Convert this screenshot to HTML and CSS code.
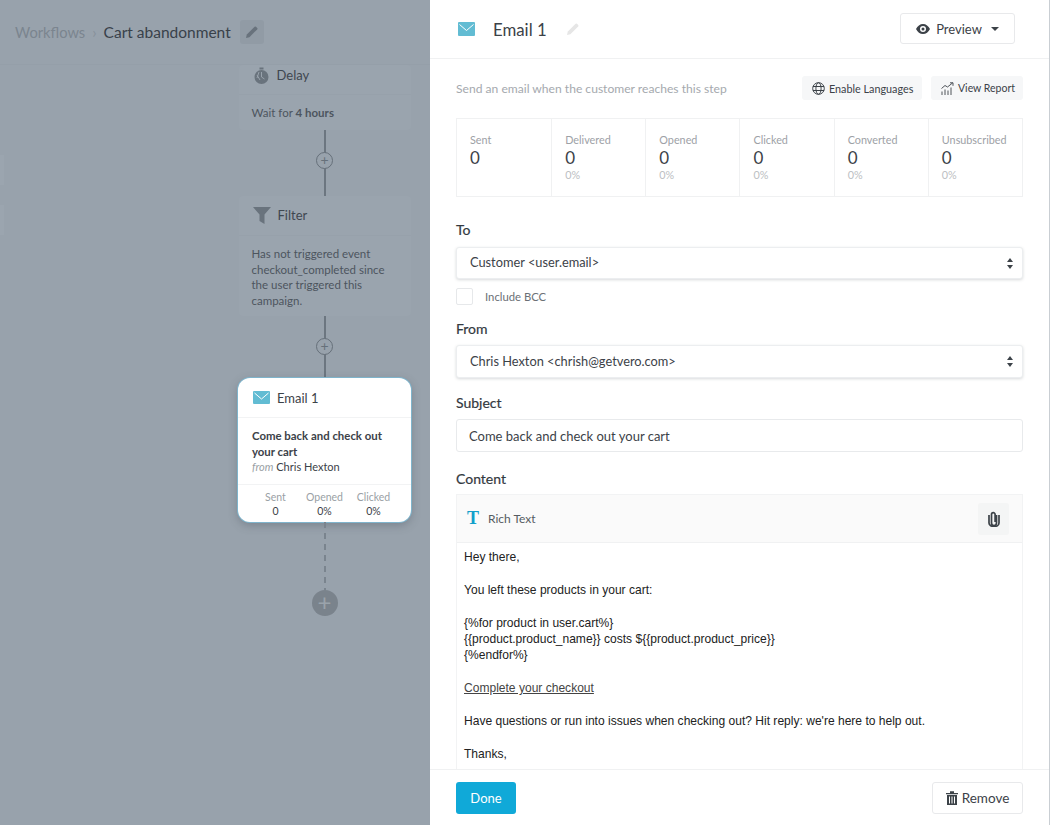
FILE: index.html
```html
<!DOCTYPE html>
<html lang="en">
<head>
    <meta charset="UTF-8">
    <title>Cart abandonment</title>
    <link rel="stylesheet" href="styles.css">
</head>
<body>
<!--workflow canvas-->
<section class="canvas">
    <header class="crumbs">
        <span class="crumb_root">Workflows</span>
        <span class="crumb_sep">&rsaquo;</span>
        <span class="crumb_name">Cart abandonment</span>
        <span class="crumb_edit">
            <svg width="14" height="14" viewBox="0 0 14 14"><path d="M1 13l.8-3.400L9.600 1.800a1 1 0 0 1 1.400 0l1.200 1.200a1 1 0 0 1 0 1.400L4.400 12.200z" fill="#68727c"/></svg>
        </span>
    </header>
    <div class="stub stub_a"></div>
    <div class="stub stub_b"></div>
    <div class="flow">
        <div class="node node_delay">
            <div class="node_head">
                <svg class="node_icon" width="17" height="18" viewBox="0 0 17 18"><circle cx="8.500" cy="10" r="7" fill="#69737d"/><rect x="6.500" y="0.500" width="4" height="2" fill="#69737d"/><path d="M8.500 5v5l3 2M4 8l3 5M6 5l-2 6" stroke="#98a2ac" fill="none"/></svg>
                <span>Delay</span>
            </div>
            <div class="node_body">Wait for <b>4 hours</b></div>
        </div>
        <div class="link link_a"><span class="plus">+</span></div>
        <div class="node node_filter">
            <div class="node_head">
                <svg class="node_icon" width="18" height="17" viewBox="0 0 18 17"><path d="M0 0h18l-6.500 7.500V17l-5-3V7.500z" fill="#69737d"/></svg>
                <span>Filter</span>
            </div>
            <div class="node_body">Has not triggered event checkout_completed since the user triggered this campaign.</div>
        </div>
        <div class="link link_b"><span class="plus">+</span></div>
        <div class="card">
            <div class="card_head">
                <svg width="17" height="13" viewBox="0 0 17 13"><rect width="17" height="13" rx="1" fill="#62bcd3"/><path d="M1.500 2l7 6 7-6" stroke="#fff" fill="none"/></svg>
                <span>Email 1</span>
            </div>
            <div class="card_body">
                <b>Come back and check out your cart</b>
                <div><i>from</i> Chris Hexton</div>
            </div>
            <div class="card_stats">
                <div><span>Sent</span>0</div>
                <div><span>Opened</span>0%</div>
                <div><span>Clicked</span>0%</div>
            </div>
        </div>
        <div class="link_dash"></div>
        <span class="plus_big">+</span>
    </div>
</section>

<!--email settings-->
<section class="panel">
    <header class="panel_head">
        <svg width="17" height="14" viewBox="0 0 17 14"><rect width="17" height="14" rx="1" fill="#62bcd3"/><path d="M1.500 2.500l7 6 7-6" stroke="#fff" fill="none"/></svg>
        <h1>Email 1</h1>
        <svg class="title_edit" width="14" height="14" viewBox="0 0 14 14"><path d="M1 13l.8-3.400L9.600 1.800a1 1 0 0 1 1.400 0l1.200 1.200a1 1 0 0 1 0 1.400L4.400 12.200z" fill="#e6e6e6"/></svg>
        <button class="btn_preview">
            <svg width="14" height="10" viewBox="0 0 14 10"><path d="M7 0C4 0 1.500 2 0 5c1.500 3 4 5 7 5s5.500-2 7-5c-1.500-3-4-5-7-5zm0 8a3 3 0 1 1 0-6 3 3 0 0 1 0 6z" fill="#3c4248"/><circle cx="7" cy="5" r="1.500" fill="#3c4248"/></svg>
            Preview
            <span class="caret"></span>
        </button>
    </header>

    <div class="panel_body">
        <div class="intro">
            <p>Send an email when the customer reaches this step</p>
            <button class="btn_soft btn_enable">
                <svg width="13" height="13" viewBox="0 0 13 13" fill="none" stroke="#3c4248"><circle cx="6.500" cy="6.500" r="5.800"/><ellipse cx="6.500" cy="6.500" rx="2.600" ry="5.800"/><path d="M1 4.500h11M1 8.500h11"/></svg>
                Enable Languages
            </button>
            <button class="btn_soft btn_report">
                <svg width="13" height="13" viewBox="0 0 13 13" fill="none" stroke="#3c4248" stroke-width="0.900"><path d="M1 13V9.500M4 13V7.500M7 13V8.500M10 13V5.500M.5 6.500L4 3.500l2.500 1.500L11.500 1M9 .8h3v3"/></svg>
                View Report
            </button>
        </div>

        <div class="stats">
            <div class="stat"><label>Sent</label><strong>0</strong></div>
            <div class="stat"><label>Delivered</label><strong>0</strong><small>0%</small></div>
            <div class="stat"><label>Opened</label><strong>0</strong><small>0%</small></div>
            <div class="stat"><label>Clicked</label><strong>0</strong><small>0%</small></div>
            <div class="stat"><label>Converted</label><strong>0</strong><small>0%</small></div>
            <div class="stat"><label>Unsubscribed</label><strong>0</strong><small>0%</small></div>
        </div>

        <h2 class="field_to">To</h2>
        <div class="select">Customer &lt;user.email&gt;<span class="updown"></span></div>
        <div class="bcc"><span class="check"></span>Include BCC</div>

        <h2 class="field_from">From</h2>
        <div class="select select_from">Chris Hexton &lt;chrish@getvero.com&gt;<span class="updown"></span></div>

        <h2 class="field_subject">Subject</h2>
        <div class="input">Come back and check out your cart</div>

        <h2 class="field_content">Content</h2>
        <div class="editor">
            <div class="editor_bar">
                <span class="editor_t">T</span>
                <span>Rich Text</span>
                <span class="clip">
                    <svg width="12" height="16" viewBox="0 0 12 16" fill="none" stroke="#3c4248" stroke-width="1.700"><path d="M8.500 4v8a2.500 2.500 0 0 1-5 0V3.500a1.800 1.800 0 0 1 3.600 0V11"/><path d="M11 4v8a5 3.500 0 0 1-10 0V4"/></svg>
                </span>
            </div>
            <div class="editor_text">
                Hey there,<br><br>
                You left these products in your cart:<br><br>
                {%for product in user.cart%}<br>
                {{product.product_name}} costs ${{product.product_price}}<br>
                {%endfor%}<br><br>
                <u>Complete your checkout</u><br><br>
                Have questions or run into issues when checking out? Hit reply: we're here to help out.<br><br>
                Thanks,
            </div>
        </div>
    </div>

    <footer class="panel_foot">
        <button class="btn_done">Done</button>
        <button class="btn_remove">
            <svg width="12" height="14" viewBox="0 0 12 14"><path d="M0 2h12v1.200H0zM4 .3h4V2H4zM1 4h10v10H1z" fill="#3c4248"/><path d="M3.500 5.500V12.500M6 5.500V12.500M8.500 5.500V12.500" stroke="#fff"/></svg>
            Remove
        </button>
    </footer>
</section>
</body>
</html>
```

FILE: styles.css
```css
*{
    margin: 0;
    padding: 0;
    box-sizing: border-box;
}
html,body{
    height: 100%;
}
body{
    display: flex;
    width: 1050px;
    height: 825px;
    overflow: hidden;
    font-family: "Lato", "Liberation Sans", sans-serif;
    color: #3c4248;
    background-color: #98a2ac;
}
button{
    font-family: inherit;
    cursor: pointer;
}

/* canvas */
.canvas{
    position: relative;
    flex: none;
    width: 430px;
    height: 825px;
    overflow: hidden;
    background-color: #98a2ac;
}
.crumbs{
    display: flex;
    align-items: center;
    height: 65px;
    padding-left: 15px;
    font-size: 15.500px;
    border-bottom: 1px solid #959fa9;
}
.crumb_root{
    font-size: 14.700px;
    color: #7b858f;
}
.crumb_sep{
    margin: 0 7px;
    color: #87919b;
}
.crumb_name{
    color: #39414a;
}
.crumb_edit{
    display: flex;
    align-items: center;
    justify-content: center;
    width: 24px;
    height: 24px;
    margin-left: 9px;
    border-radius: 3px;
    background-color: #919ba5;
}
.stub{
    position: absolute;
    left: 0;
    width: 4px;
    height: 30px;
    background-color: #9ba5af;
}
.stub_a{
    top: 155px;
}
.stub_b{
    top: 205px;
}
.flow{
    display: flex;
    flex-direction: column;
    align-items: center;
    width: 173px;
    margin-left: 238px;
}
.node{
    width: 172px;
    border-radius: 4px;
    background-color: #9aa4ae;
    color: #4d555e;
    font-size: 11.500px;
    line-height: 15.500px;
}
.node_head{
    display: flex;
    align-items: center;
    gap: 7px;
    padding-left: 14px;
    font-size: 13px;
    color: #3f4750;
    border-bottom: 1px solid #97a1ab;
}
.node_delay .node_head{
    height: 30px;
    padding-bottom: 8px;
}
.node_filter .node_head{
    height: 40px;
}
.node_body{
    padding: 10px 13px;
}
.node_delay .node_body{
    height: 35px;
}
.node_filter .node_body{
    height: 80px;
}
.link{
    display: flex;
    align-items: center;
    justify-content: center;
    width: 100%;
    background: linear-gradient(#6c7680,#6c7680) center / 2px 100% no-repeat;
}
.link_a{
    height: 66px;
}
.link_b{
    height: 62px;
}
.plus{
    display: block;
    width: 17px;
    height: 17px;
    border: 1px solid #66707a;
    border-radius: 50%;
    background-color: #98a2ac;
    color: #66707a;
    font-size: 14px;
    line-height: 14px;
    text-align: center;
}
.link_a .plus{
    margin-top: -6px;
}
.link_b .plus{
    margin-top: -2px;
}
.card{
    width: 173px;
    height: 144px;
    border-radius: 12px;
    background-color: #FFFFFF;
    box-shadow: 0 0 0 1px #7fb4cc, 0 3px 10px rgba(60,70,80,0.35);
    color: #3c4248;
}
.card_head{
    display: flex;
    align-items: center;
    gap: 7px;
    height: 40px;
    padding-left: 15px;
    font-size: 13px;
    border-bottom: 1px solid #f2f3f4;
}
.card_body{
    height: 67px;
    padding: 10px 14px 0;
    font-size: 11px;
    line-height: 15.700px;
    border-bottom: 1px solid #f2f3f4;
}
.card_body b{
    font-size: 11.400px;
}
.card_body i{
    color: #9a9fa5;
}
.card_stats{
    display: grid;
    grid-template-columns: 49px 49px 49px;
    justify-content: center;
    padding-top: 5px;
    font-size: 10.500px;
    line-height: 14px;
    text-align: center;
}
.card_stats span{
    display: block;
    color: #9a9fa5;
}
.link_dash{
    width: 2px;
    height: 68px;
    background: repeating-linear-gradient(#7a848e 0 6px, transparent 6px 11px);
}
.plus_big{
    display: block;
    width: 26px;
    height: 26px;
    border-radius: 50%;
    background-color: #7a838c;
    color: #9aa3ab;
    font-size: 24px;
    line-height: 24px;
    text-align: center;
}

/* right panel */
.panel{
    display: flex;
    flex-direction: column;
    flex: none;
    width: 620px;
    height: 825px;
    background-color: #FFFFFF;
    border-right: 1px solid #c9ced3;
}
.panel_head{
    display: flex;
    align-items: center;
    flex: none;
    height: 59px;
    padding: 0 34px 0 28px;
    border-bottom: 1px solid #f0f1f2;
}
.panel_head h1{
    margin-left: 18px;
    font-size: 16.800px;
    font-weight: 400;
    color: #3c4248;
}
.title_edit{
    margin-left: 19px;
}
.btn_preview{
    display: flex;
    align-items: center;
    justify-content: center;
    gap: 6px;
    width: 115px;
    height: 31px;
    margin: -1px 0 0 auto;
    background-color: #FFFFFF;
    border: 1px solid #e8e9eb;
    border-radius: 3px;
    color: #3c4248;
    font-size: 13px;
}
.caret{
    width: 0;
    height: 0;
    margin-left: 3px;
    border-left: 4px solid transparent;
    border-right: 4px solid transparent;
    border-top: 4px solid #3c4248;
}
.panel_body{
    flex: 1;
    min-height: 0;
    overflow: hidden;
    padding: 17px 26px 0;
}
.intro{
    display: flex;
    align-items: center;
    height: 24px;
    font-size: 12.100px;
    color: #a5a9ae;
}
.intro p{
    flex: 1;
}
.btn_soft{
    display: flex;
    align-items: center;
    gap: 4px;
    height: 24px;
    padding-left: 10px;
    margin-left: 9px;
    border: 0;
    border-radius: 3px;
    background-color: #f6f7f8;
    color: #3c4248;
    font-size: 10.800px;
}
.btn_enable{
    width: 120px;
}
.btn_report{
    width: 92px;
    font-size: 10.500px;
}
.stats{
    display: grid;
    grid-template-columns: repeat(6, 1fr);
    height: 79px;
    margin-top: 18px;
    border: 1px solid #f0f1f2;
}
.stat{
    padding: 14px 0 0 13px;
    border-left: 1px solid #f0f1f2;
}
.stat:first-child{
    border-left: 0;
}
.stat label,.stat small{
    display: block;
    font-size: 10.800px;
    line-height: 14px;
    color: #9da1a6;
}
.stat strong{
    display: block;
    font-size: 17px;
    font-weight: 400;
    line-height: 21px;
}
.stat small{
    color: #bcc0c3;
}
h2{
    font-size: 14px;
    font-weight: 400;
    line-height: 18px;
    color: #33393f;
    -webkit-text-stroke: 0.200px #33393f;
}
.field_to{
    margin-top: 24px;
}
.field_from{
    margin-top: 15px;
}
.field_subject{
    margin-top: 16px;
}
.field_content{
    margin-top: 18px;
}
.select,.input{
    position: relative;
    margin-top: 8px;
    padding-left: 13px;
    font-size: 12.800px;
    border: 1px solid #eceef0;
    border-radius: 3px;
    background-color: #FFFFFF;
}
.select{
    height: 32px;
    line-height: 29px;
    box-shadow: 0 1px 3px rgba(40,50,60,0.18);
}
.select_from{
    height: 33px;
    margin-top: 7px;
    line-height: 31px;
}
.input{
    height: 33px;
    margin-top: 7px;
    padding-left: 12px;
    font-size: 13px;
    line-height: 32px;
    border-color: #e8eaec;
}
.updown{
    position: absolute;
    top: 10px;
    right: 9px;
    display: flex;
    flex-direction: column;
    gap: 3px;
}
.updown::before,.updown::after{
    content: "";
    width: 0;
    height: 0;
    border-left: 3px solid transparent;
    border-right: 3px solid transparent;
}
.updown::before{
    border-bottom: 4px solid #3c4248;
}
.updown::after{
    border-top: 4px solid #3c4248;
}
.bcc{
    display: flex;
    align-items: center;
    gap: 12px;
    height: 17px;
    margin-top: 9px;
    font-size: 11.300px;
    color: #6b7076;
}
.check{
    width: 17px;
    height: 17px;
    border: 1px solid #e6e8ea;
    border-radius: 2px;
}
.editor{
    margin-top: 6px;
    border: 1px solid #f2f3f4;
}
.editor_bar{
    display: flex;
    align-items: center;
    gap: 9px;
    height: 48px;
    padding: 0 13px 0 10px;
    background-color: #fafafa;
    border-bottom: 1px solid #f0f1f2;
    font-size: 12px;
    color: #565c62;
}
.editor_t{
    width: 12px;
    font-family: "Liberation Serif", serif;
    font-size: 18px;
    font-weight: 700;
    color: #129fca;
}
.clip{
    display: flex;
    align-items: center;
    justify-content: center;
    width: 31px;
    height: 32px;
    margin-left: auto;
    border-radius: 3px;
    background-color: #f4f5f5;
}
.editor_text{
    padding: 6px 7px 40px;
    font-family: "Liberation Sans", Arial, sans-serif;
    font-size: 12.050px;
    line-height: 16.400px;
    color: #222222;
}
.editor_text u{
    color: #444444;
}
.panel_foot{
    display: flex;
    align-items: center;
    justify-content: space-between;
    flex: none;
    height: 56px;
    padding: 0 26px;
    border-top: 1px solid #f0f1f2;
    background-color: #FFFFFF;
}
.btn_done{
    width: 60px;
    height: 32px;
    border: 0;
    border-radius: 3px;
    background-color: #10a9d8;
    color: #FFFFFF;
    font-size: 13px;
}
.btn_remove{
    display: flex;
    align-items: center;
    justify-content: center;
    gap: 4px;
    width: 91px;
    height: 32px;
    border: 1px solid #e8e9eb;
    border-radius: 3px;
    background-color: #FFFFFF;
    color: #3c4248;
    font-size: 13.500px;
}
```
